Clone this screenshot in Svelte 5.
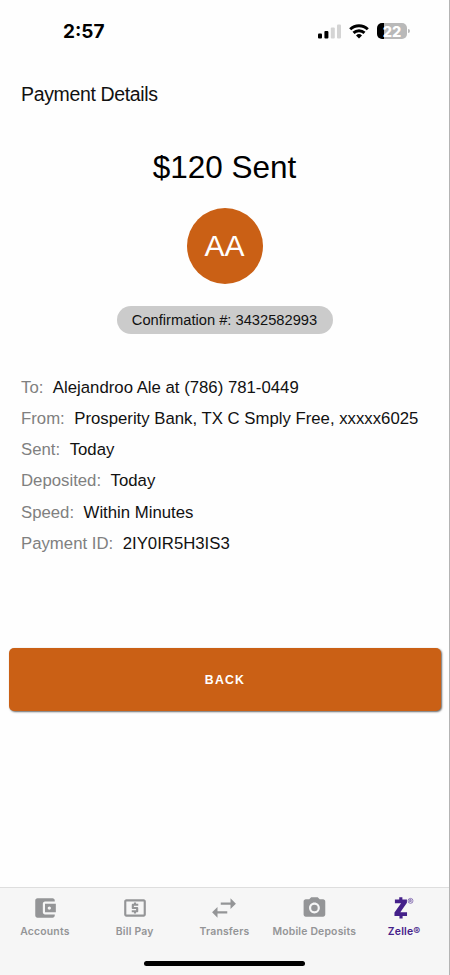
<script>
    let activeTab = 'Zelle®';

    const details = [
        { label: 'To', value: 'Alejandroo Ale at (786) 781-0449' },
        { label: 'From', value: 'Prosperity Bank, TX C Smply Free, xxxxx6025' },
        { label: 'Sent', value: 'Today' },
        { label: 'Deposited', value: 'Today' },
        { label: 'Speed', value: 'Within Minutes' },
        { label: 'Payment ID', value: '2IY0IR5H3IS3' },
    ];

    const tabs = ['Accounts', 'Bill Pay', 'Transfers', 'Mobile Deposits', 'Zelle®'];
</script>

<div class="screen">
    <header class="status-bar">
        <span class="time">2:57</span>
        <div class="status-icons">
            <svg class="signal" width="23" height="15" viewBox="0 0 23 15">
                <rect x="0" y="9.5" width="4" height="5" rx="1" />
                <rect x="6.4" y="7" width="4" height="7.5" rx="1" />
                <rect class="off" x="12.8" y="3.5" width="4" height="11" rx="1" />
                <rect class="off" x="19" y="0.5" width="4" height="14" rx="1" />
            </svg>
            <svg class="wifi" width="20" height="15" viewBox="0 0 20 15">
                <path d="M1.2 5.3a12.7 12.7 0 0 1 17.6 0" />
                <path d="M4.5 8.9a8 8 0 0 1 11 0" />
                <path class="dot" d="M10 14.5l3-3a4.3 4.3 0 0 0-6 0z" />
            </svg>
            <div class="battery">
                <span class="level">22</span>
                <i class="cap"></i>
            </div>
        </div>
    </header>

    <main>
        <h1>Payment Details</h1>

        <section class="summary">
            <h2>$120 Sent</h2>
            <div class="avatar">AA</div>
            <p class="confirmation">Confirmation #: 3432582993</p>
        </section>

        <dl>
            {#each details as row}
                <div class="row">
                    <dt>{row.label}:</dt>
                    <dd>{row.value}</dd>
                </div>
            {/each}
        </dl>

        <button class="back-button">BACK</button>
    </main>

    <nav>
        <div class="tabs">
            {#each tabs as tab}
                <button class="tab" class:active={tab === activeTab} on:click={() => (activeTab = tab)}>
                    <svg width="26" height="26" viewBox="0 0 24 24">
                        {#if tab === 'Accounts'}
                            <path d="M21 18v1c0 1.1-.9 2-2 2H5c-1.11 0-2-.9-2-2V5c0-1.1.89-2 2-2h14c1.1 0 2 .9 2 2v1h-9c-1.11 0-2 .9-2 2v8c0 1.1.89 2 2 2h9zm-9-2h10V8H12v8zm4-2.5c-.83 0-1.5-.67-1.5-1.5s.67-1.5 1.5-1.5 1.5.67 1.5 1.5-.67 1.5-1.5 1.5z" />
                        {:else if tab === 'Bill Pay'}
                            <path d="M11 17h2v-1h1c.55 0 1-.45 1-1v-3c0-.55-.45-1-1-1h-3v-1h4V8h-2V7h-2v1h-1c-.55 0-1 .45-1 1v3c0 .55.45 1 1 1h3v1H9v2h2v1zm9-13H4c-1.11 0-1.99.89-1.99 2L2 18c0 1.11.89 2 2 2h16c1.11 0 2-.89 2-2V6c0-1.11-.89-2-2-2zm0 14H4V6h16v12z" />
                        {:else if tab === 'Transfers'}
                            <path d="M23 8l-5-5v4H9v2h9v4zM1 16l5 5v-4h9v-2H6v-4z" />
                        {:else if tab === 'Mobile Deposits'}
                            <circle cx="12.4" cy="12" r="3" />
                            <path d="M9.4 2L7.57 4H4.4c-1.1 0-2 .9-2 2v12c0 1.1.9 2 2 2h16c1.1 0 2-.9 2-2V6c0-1.1-.9-2-2-2h-3.17L15.4 2h-6zm3 15c-2.76 0-5-2.24-5-5s2.24-5 5-5 5 2.24 5 5-2.24 5-5 5z" />
                        {:else}
                            <path d="M3.6 4.100h4V2h2.900v2.100h4.200v3L8.600 15.900h6.200v3.500h-4.100v2.400H7.800v-2.400H3.200v-3.200l6.100-8.600H3.600z" />
                            <circle class="mark" cx="18" cy="5.400" r="2.300" />
                            <path class="mark" d="M17.300 6.700V4.200h.8a.65.65 0 0 1 0 1.300h-.8m.9 0l.6 1.200" />
                        {/if}
                    </svg>
                    <span>{tab}</span>
                </button>
            {/each}
        </div>
        <div class="home-indicator"></div>
    </nav>
</div>

<style>
    :global(body) {
        margin: 0;
        background: #fefefe;
    }

    .screen {
        display: flex;
        flex-direction: column;
        box-sizing: border-box;
        width: 450px;
        height: 975px;
        border-right: 1px solid #b4b4b4;
        background: #fefefe;
        color: #111;
        font-family: 'Liberation Sans', Arial, sans-serif;
    }

    .status-bar {
        display: flex;
        justify-content: space-between;
        align-items: center;
        height: 62px;
        box-sizing: border-box;
        padding: 0 42px 0 63px;
        font-family: Inter, sans-serif;
    }

    .time {
        font-size: 19px;
        font-weight: 700;
        color: #000;
    }

    .status-icons {
        display: flex;
        align-items: center;
    }

    .signal {
        margin-right: 8px;
    }

    .signal .off {
        fill: #d4d4d4;
    }

    .wifi {
        margin-right: 8px;
        fill: none;
        stroke: #000;
        stroke-width: 2.9;
    }

    .wifi .dot {
        fill: #000;
        stroke: none;
    }

    .battery {
        position: relative;
        display: flex;
        justify-content: center;
        align-items: center;
        width: 30px;
        height: 16px;
        border-radius: 5px;
        background: linear-gradient(to right, #000 22%, #b9b9b9 22%);
        color: #fff;
        font-size: 14.5px;
        font-weight: 800;
    }

    .cap {
        position: absolute;
        right: -3px;
        top: 6px;
        width: 2px;
        height: 4px;
        border-radius: 0 2px 2px 0;
        background: #b9b9b9;
    }

    main {
        flex: 1;
    }

    h1 {
        margin: 20px 0 0 21px;
        font-size: 19.5px;
        font-weight: 400;
        line-height: 25px;
        letter-spacing: -0.35px;
    }

    .summary {
        display: flex;
        flex-direction: column;
        align-items: center;
    }

    h2 {
        margin: 42px 0 22px;
        font-size: 31.5px;
        font-weight: 400;
        line-height: 37px;
        color: #000;
    }

    .avatar {
        display: flex;
        justify-content: center;
        align-items: center;
        width: 76px;
        height: 76px;
        border-radius: 50%;
        background: #ca6015;
        color: #fff;
        font-size: 30px;
    }

    .confirmation {
        margin: 22px 0 0;
        width: 216px;
        border-radius: 14px;
        background: #cbcbcb;
        font-size: 14.7px;
        line-height: 28px;
        text-align: center;
    }

    dl {
        margin: 37.5px 0 0 21px;
    }

    .row {
        display: flex;
        gap: 9.5px;
        height: 31.33px;
        font-size: 16.75px;
        line-height: 31px;
        white-space: nowrap;
    }

    dt {
        color: #808080;
    }

    dd {
        margin: 0;
    }

    .back-button {
        display: block;
        width: 432px;
        height: 63px;
        margin: 88.5px 0 0 9px;
        padding: 2px 0 0;
        border: none;
        border-radius: 5px;
        background: #ca6015;
        box-shadow: 1px 1px 2px rgba(0, 0, 0, 0.6);
        color: #fff;
        font-family: inherit;
        font-size: 12.3px;
        font-weight: 700;
        letter-spacing: 1.2px;
    }

    nav {
        box-sizing: border-box;
        height: 88px;
        border-top: 1px solid #dedede;
        background: #f6f6f6;
    }

    .tabs {
        display: flex;
    }

    .tab {
        display: flex;
        flex-direction: column;
        align-items: center;
        width: 90px;
        padding: 7px 0 0;
        border: none;
        background: none;
        color: #949597;
        font-family: Inter, sans-serif;
        font-size: 10.4px;
        font-weight: 600;
        letter-spacing: 0.2px;
        line-height: 14px;
        white-space: nowrap;
    }

    .tab svg {
        margin-bottom: 4px;
        fill: currentColor;
    }

    .tab.active {
        color: #45218a;
    }

    .tab .mark {
        fill: none;
        stroke: currentColor;
        stroke-width: 0.5;
    }

    .home-indicator {
        width: 161px;
        height: 5px;
        margin: 22px auto 0;
        border-radius: 3px;
        background: #000;
    }
</style>
